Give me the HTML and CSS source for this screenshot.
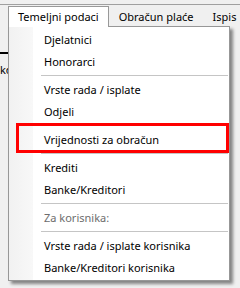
FILE: index.html
```html
<!DOCTYPE html>
<html lang="hr">
<head>
    <meta charset="UTF-8">
    <title>Temeljni podaci</title>
    <link rel="stylesheet" href="styles.css">
</head>
<body>
    <div class="frame-top"></div>
    <div class="menubar">
        <div class="menubar-item active">Temeljni podaci</div>
        <div class="menubar-item">Obračun plaće</div>
        <div class="menubar-item">Ispis</div>
    </div>
    <div class="content">
        <div class="content-rule"></div>
        <div class="content-label">ko</div>
    </div>

    <div class="dropdown">
        <div class="dd-item">Djelatnici</div>
        <div class="dd-item">Honorarci</div>
        <div class="dd-sep"></div>
        <div class="dd-item">Vrste rada / isplate</div>
        <div class="dd-item">Odjeli</div>
        <div class="dd-sep"></div>
        <div class="dd-item">Vrijednosti za obračun</div>
        <div class="dd-sep"></div>
        <div class="dd-item">Krediti</div>
        <div class="dd-item">Banke/Kreditori</div>
        <div class="dd-sep"></div>
        <div class="dd-item disabled">Za korisnika:</div>
        <div class="dd-sep"></div>
        <div class="dd-item">Vrste rada / isplate korisnika</div>
        <div class="dd-item">Banke/Kreditori korisnika</div>
    </div>
    <div class="highlight-box"></div>
</body>
</html>
```

FILE: styles.css
```css
body {
    margin: 0;
    width: 240px;
    height: 288px;
    overflow: hidden;
    position: relative;
    background: #f0f0f0;
    font-family: 'Noto Sans', 'Liberation Sans', sans-serif;
    font-size: 11px;
    color: #000;
}
.frame-top {
    height: 4px;
    border-bottom: 1px solid #a0a0a0;
    margin-bottom: 2px;
}
.menubar {
    display: flex;
    height: 19px;
    padding-left: 8px;
}
.menubar-item {
    padding: 0 9px 0 10px;
    line-height: 19px;
    white-space: nowrap;
}
.menubar-item.active {
    position: relative;
    z-index: 3;
    height: 20px;
    padding: 0 9px 0 9px;
    background: #fff;
    border: 1px solid #999;
    border-bottom: none;
    margin-top: -1px;
    line-height: 20px;
}
.content {
    padding-top: 26px;
}
.content-rule {
    width: 8px;
    height: 2px;
    background: #000;
}
.content-label {
    margin-top: 9px;
    line-height: 14px;
}
.dropdown {
    position: absolute;
    z-index: 2;
    left: 8px;
    top: 26px;
    width: 220px;
    padding: 2px 0 1px 0;
    border: 1px solid #979797;
    background: linear-gradient(to right, #f1f1f1 0, #f8f8f8 24px, #fff 24px);
    box-shadow: 3px 3px 3px rgba(0, 0, 0, 0.45);
}
.dd-item {
    height: 22px;
    line-height: 22px;
    padding-left: 35px;
    white-space: nowrap;
}
.dd-item.disabled {
    color: #6d6d6d;
}
.dd-sep {
    height: 1px;
    margin: 2px 1px 3px 32px;
    background: #c5c5c5;
}
.highlight-box {
    position: absolute;
    z-index: 4;
    left: 16px;
    top: 123px;
    width: 207px;
    height: 24px;
    border: 3px solid #f00;
}
```
